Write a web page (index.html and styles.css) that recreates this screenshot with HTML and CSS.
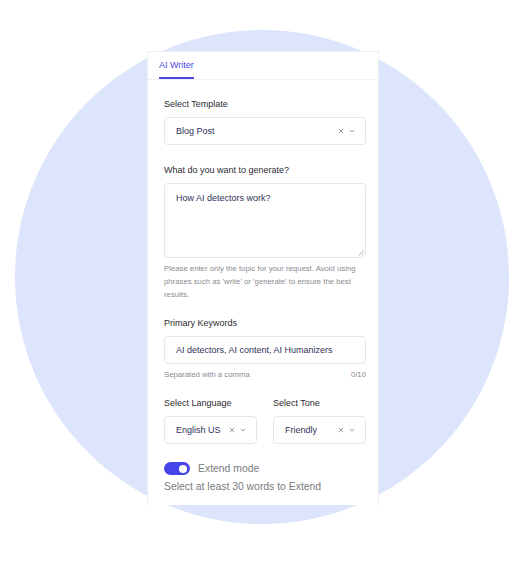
FILE: index.html
```html
<!DOCTYPE html>
<html lang="en">
<head>
<meta charset="utf-8">
<title>AI Writer</title>
<link rel="stylesheet" href="styles.css">
</head>
<body>
<div class="stage">
  <div class="card">
    <div class="tabs"><span class="tab">AI Writer</span></div>
    <div class="form">
      <div class="field f-template">
        <div class="label">Select Template</div>
        <div class="control select">
          <span class="value">Blog Post</span>
          <span class="icons">
            <svg class="ico-x" width="6" height="6" viewBox="0 0 6 6"><path d="M0.8 0.8L5.2 5.2M5.2 0.8L0.8 5.2" stroke="#8d8f99" stroke-width="0.9" fill="none"/></svg>
            <svg class="ico-chev" width="6" height="4" viewBox="0 0 6 4"><path d="M0.8 0.9L3 3.1L5.2 0.9" stroke="#8d8f99" stroke-width="0.9" fill="none"/></svg>
          </span>
        </div>
      </div>

      <div class="field f-topic">
        <div class="label">What do you want to generate?</div>
        <div class="textarea">
          <span class="value">How AI detectors work?</span>
          <svg class="resize" width="7" height="7" viewBox="0 0 7 7"><path d="M6.5 1.5L1.5 6.5M6.5 4.5L4.5 6.5" stroke="#9a9ca4" stroke-width="0.8" fill="none"/></svg>
        </div>
        <p class="help">Please enter only the topic for your request. Avoid using phrases such as 'write' or 'generate' to ensure the best results.</p>
      </div>

      <div class="field f-keywords">
        <div class="label">Primary Keywords</div>
        <div class="control input">
          <span class="value">AI detectors, AI content, AI Humanizers</span>
        </div>
        <div class="hint-row"><span>Separated with a comma</span><span>0/10</span></div>
      </div>

      <div class="row">
        <div class="field">
          <div class="label">Select Language</div>
          <div class="control select">
            <span class="value">English US</span>
            <span class="icons">
              <svg class="ico-x" width="6" height="6" viewBox="0 0 6 6"><path d="M0.8 0.8L5.2 5.2M5.2 0.8L0.8 5.2" stroke="#8d8f99" stroke-width="0.9" fill="none"/></svg>
              <svg class="ico-chev" width="6" height="4" viewBox="0 0 6 4"><path d="M0.8 0.9L3 3.1L5.2 0.9" stroke="#8d8f99" stroke-width="0.9" fill="none"/></svg>
            </span>
          </div>
        </div>
        <div class="field">
          <div class="label">Select Tone</div>
          <div class="control select">
            <span class="value">Friendly</span>
            <span class="icons">
              <svg class="ico-x" width="6" height="6" viewBox="0 0 6 6"><path d="M0.8 0.8L5.2 5.2M5.2 0.8L0.8 5.2" stroke="#8d8f99" stroke-width="0.9" fill="none"/></svg>
              <svg class="ico-chev" width="6" height="4" viewBox="0 0 6 4"><path d="M0.8 0.9L3 3.1L5.2 0.9" stroke="#8d8f99" stroke-width="0.9" fill="none"/></svg>
            </span>
          </div>
        </div>
      </div>

      <div class="toggle-row">
        <span class="toggle"><span class="knob"></span></span>
        <span class="toggle-label">Extend mode</span>
      </div>
      <div class="extend-note">Select at least 30 words to Extend</div>
    </div>
  </div>
</div>
</body>
</html>
```

FILE: styles.css
```css
* { box-sizing: border-box; }

html, body {
  margin: 0;
  padding: 0;
  background: #ffffff;
}

body {
  font-family: "Liberation Sans", Arial, sans-serif;
}

.stage {
  width: 527px;
  height: 580px;
  padding: 51px 0 0 147px;
  background: radial-gradient(circle 248px at 262px 277px, #dce5fb 246.5px, rgba(220, 229, 251, 0) 247.5px);
}

.card {
  width: 232px;
  background: #ffffff;
  border: 1px solid #eceef3;
  border-bottom: none;
}

.tabs {
  height: 28px;
  border-bottom: 1px solid #eef0f4;
  padding-left: 11px;
  display: flex;
}

.tab {
  display: block;
  height: 27px;
  line-height: 26px;
  font-size: 9px;
  color: #4b49e2;
  border-bottom: 2px solid #4b49e2;
}

.form {
  padding: 18px 12px 11px 16px;
}

.label {
  font-size: 9px;
  line-height: 12px;
  color: #2c2c30;
  margin-bottom: 7px;
  white-space: nowrap;
}

.f-template { margin-bottom: 19px; }
.f-topic { margin-bottom: 16px; }
.f-keywords { margin-bottom: 16px; }

.control {
  height: 28px;
  border: 1px solid #e4e6eb;
  border-radius: 4px;
  display: flex;
  align-items: center;
  padding: 0 10px 0 11px;
  background: #ffffff;
}

.value {
  font-size: 9px;
  color: #30325a;
  white-space: nowrap;
  flex: 1;
}

.icons {
  display: flex;
  align-items: center;
  gap: 5px;
}

.icons svg { display: block; }

.textarea {
  position: relative;
  height: 75px;
  border: 1px solid #e4e6eb;
  border-radius: 4px;
  padding: 8px 11px;
  line-height: 12px;
}

.textarea .value { display: block; }

.resize {
  position: absolute;
  right: 1px;
  bottom: 1px;
  display: block;
}

.help {
  margin: 4px 0 0;
  font-size: 7.75px;
  line-height: 13px;
  color: #8a8b90;
}

.hint-row {
  margin-top: 5px;
  display: flex;
  justify-content: space-between;
  font-size: 7.75px;
  line-height: 12px;
  color: #8a8b90;
}

.row {
  display: grid;
  grid-template-columns: 1fr 1fr;
  gap: 16px;
}

.toggle-row {
  margin-top: 18px;
  display: flex;
  align-items: center;
  gap: 8px;
  height: 13px;
}

.toggle {
  width: 26px;
  height: 13px;
  border-radius: 7px;
  background: #4544e8;
  display: flex;
  align-items: center;
  justify-content: flex-end;
  padding-right: 3px;
}

.knob {
  width: 8px;
  height: 8px;
  border-radius: 50%;
  background: #ffffff;
}

.toggle-label {
  font-size: 10.4px;
  line-height: 13px;
  color: #7a7b80;
}

.extend-note {
  margin-top: 5px;
  font-size: 10.4px;
  line-height: 14px;
  color: #7a7b80;
}
```
